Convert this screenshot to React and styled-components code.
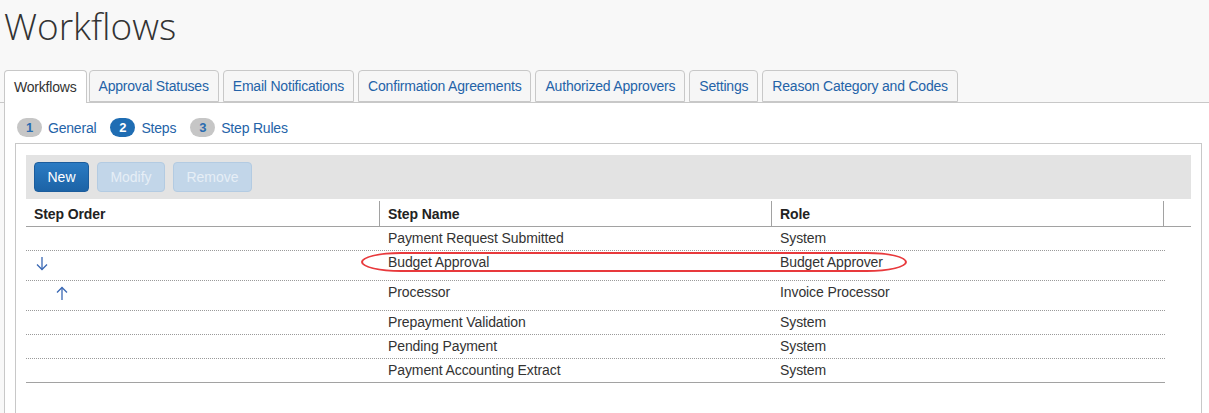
import React from "react";
import styled, { createGlobalStyle } from "styled-components";

const GlobalStyle = createGlobalStyle`
  body {
    margin: 0;
    background: #f8f8f8;
    font-family: "Liberation Sans", Arial, sans-serif;
    font-size: 14px;
    letter-spacing: -0.1px;
    color: #333;
  }
`;

const tabs = [
  "Workflows",
  "Approval Statuses",
  "Email Notifications",
  "Confirmation Agreements",
  "Authorized Approvers",
  "Settings",
  "Reason Category and Codes",
];

const steps = [
  { num: 1, label: "General" },
  { num: 2, label: "Steps", active: true },
  { num: 3, label: "Step Rules" },
];

const rows = [
  { name: "Payment Request Submitted", role: "System", h: 24 },
  { name: "Budget Approval", role: "Budget Approver", h: 30, arrow: "down" },
  { name: "Processor", role: "Invoice Processor", h: 30, arrow: "up" },
  { name: "Prepayment Validation", role: "System", h: 24 },
  { name: "Pending Payment", role: "System", h: 24 },
  { name: "Payment Accounting Extract", role: "System", h: 24, last: true },
];

const ArrowIcon = ({ dir }) => (
  <svg width="12" height="15" viewBox="0 0 12 15" fill="none" stroke="#3a68b4" strokeWidth="1.3">
    {dir === "down" ? (
      <>
        <path d="M6 1 V13.5" />
        <path d="M1 8.5 L6 13.5 L11 8.5" />
      </>
    ) : (
      <>
        <path d="M6 14 V1.5" />
        <path d="M1 6.5 L6 1.5 L11 6.5" />
      </>
    )}
  </svg>
);

const App = () => {
  return (
    <Page>
      <GlobalStyle />
      <Title>Workflows</Title>
      <TabBar>
        {tabs.map((t, i) => (
          <Tab key={t} active={i === 0}>
            {t}
          </Tab>
        ))}
      </TabBar>
      <Panel>
        <StepNav>
          {steps.map((s) => (
            <StepItem key={s.num}>
              <StepBadge active={s.active}>{s.num}</StepBadge>
              <StepLabel>{s.label}</StepLabel>
            </StepItem>
          ))}
        </StepNav>
        <GridBox>
          <Toolbar>
            <Button primary>New</Button>
            <Button disabled>Modify</Button>
            <Button disabled>Remove</Button>
          </Toolbar>
          <HeaderRow>
            <HeadCell>Step Order</HeadCell>
            <HeadCell divider>Step Name</HeadCell>
            <HeadCell divider>Role</HeadCell>
            <HeadCell divider />
          </HeaderRow>
          <Body>
            {rows.map((r) => (
              <Row key={r.name} h={r.h} last={r.last}>
                <OrderCell indent={r.arrow === "up" ? 30 : 10}>
                  {r.arrow && <ArrowIcon dir={r.arrow} />}
                </OrderCell>
                <Cell>{r.name}</Cell>
                <Cell>{r.role}</Cell>
              </Row>
            ))}
            <Highlight />
          </Body>
        </GridBox>
      </Panel>
    </Page>
  );
};

export default App;

const Page = styled.div`
  width: 1209px;
  height: 413px;
  overflow: hidden;
`;

const Title = styled.h1`
  margin: 0 0 25px;
  padding: 7px 0 0 4px;
  font-family: "Open Sans", sans-serif;
  font-weight: 300;
  font-size: 37px;
  line-height: 38px;
  letter-spacing: 0;
  color: #333;
`;

//TabBar
const TabBar = styled.div`
  display: flex;
  align-items: flex-end;
  gap: 4px;
  padding-left: 4px;
  height: 32px;
  border-bottom: 1px solid #c8c8c8;
`;

const Tab = styled.div`
  box-sizing: border-box;
  height: ${(props) => (props.active ? "33px" : "32px")};
  margin-bottom: ${(props) => (props.active ? "-1px" : "0")};
  margin-right: ${(props) => (props.active ? "-2px" : "0")};
  padding: 0 9px;
  display: flex;
  align-items: center;
  padding-bottom: ${(props) => (props.active ? "1px" : "0")};
  border: 1px solid #c8c8c8;
  border-bottom: ${(props) => (props.active ? "none" : "1px solid #c8c8c8")};
  border-radius: 4px 4px 0 0;
  background: ${(props) => (props.active ? "#fff" : "#f6f6f6")};
  color: ${(props) => (props.active ? "#333" : "#2463a8")};
  letter-spacing: -0.2px;
  white-space: nowrap;
`;

//Panel
const Panel = styled.div`
  margin-left: 4px;
  height: 320px;
  background: #fff;
  border-left: 1px solid #c8c8c8;
`;

const StepNav = styled.div`
  display: flex;
  align-items: center;
  gap: 14px;
  padding: 15px 0 0 12px;
  height: 19px;
`;

const StepItem = styled.div`
  display: flex;
  align-items: center;
  gap: 6px;
`;

const StepBadge = styled.span`
  width: 25px;
  height: 19px;
  border-radius: 10px;
  display: flex;
  align-items: center;
  justify-content: center;
  font-size: 13px;
  font-weight: bold;
  background: ${(props) => (props.active ? "#1f6db3" : "#c6c6c6")};
  color: ${(props) => (props.active ? "#fff" : "#2a6cb0")};
`;

const StepLabel = styled.span`
  color: #2463a8;
  letter-spacing: -0.2px;
`;

const GridBox = styled.div`
  box-sizing: border-box;
  margin: 6px 0 0 10px;
  width: 1187px;
  height: 300px;
  padding: 11px 10px 0;
  border: 1px solid #c8c8c8;
`;

const Toolbar = styled.div`
  display: flex;
  align-items: center;
  gap: 8px;
  height: 44px;
  padding-left: 8px;
  background: #e3e3e3;
`;

const Button = styled.button`
  height: 30px;
  padding: 0 12px;
  border-radius: 4px;
  font-family: "Liberation Sans", Arial, sans-serif;
  font-size: 14px;
  border: 1px solid ${(props) => (props.primary ? "#1b5c9c" : "#b3cbe2")};
  background: ${(props) =>
    props.primary
      ? "linear-gradient(#2b7bc3, #1c63a6)"
      : "#c2d6e9"};
  color: ${(props) => (props.primary ? "#fff" : "#e6eef6")};
  min-width: ${(props) => (props.primary ? "55px" : "68px")};
  cursor: ${(props) => (props.disabled ? "default" : "pointer")};

  &:last-child {
    min-width: 79px;
  }
`;

//Table
const HeaderRow = styled.div`
  display: grid;
  grid-template-columns: 353px 392px 392px 28px;
  height: 25px;
  margin-top: 2px;
  border-bottom: 1px solid #a2a2a2;
`;

const HeadCell = styled.div`
  display: flex;
  align-items: center;
  padding-left: 8px;
  font-weight: bold;
  color: #222;
  border-left: ${(props) => (props.divider ? "1px solid #a2a2a2" : "none")};
`;

const Body = styled.div`
  position: relative;
  width: 1139px;
`;

const Row = styled.div`
  box-sizing: border-box;
  display: grid;
  grid-template-columns: 353px 392px 394px;
  height: ${(props) => props.h}px;
  border-bottom: ${(props) =>
    props.last ? "1px solid #a2a2a2" : "1px dotted #9a9a9a"};
`;

const Cell = styled.div`
  padding: 2px 0 0 9px;
  line-height: 18px;
  color: #333;
`;

const OrderCell = styled.div`
  padding: 5px 0 0 ${(props) => props.indent}px;
  line-height: 0;
`;

const Highlight = styled.div`
  position: absolute;
  left: 335px;
  top: 25px;
  width: 542px;
  height: 16px;
  border: 2px solid #e8393c;
  border-radius: 40px / 10px;
  pointer-events: none;
`;
